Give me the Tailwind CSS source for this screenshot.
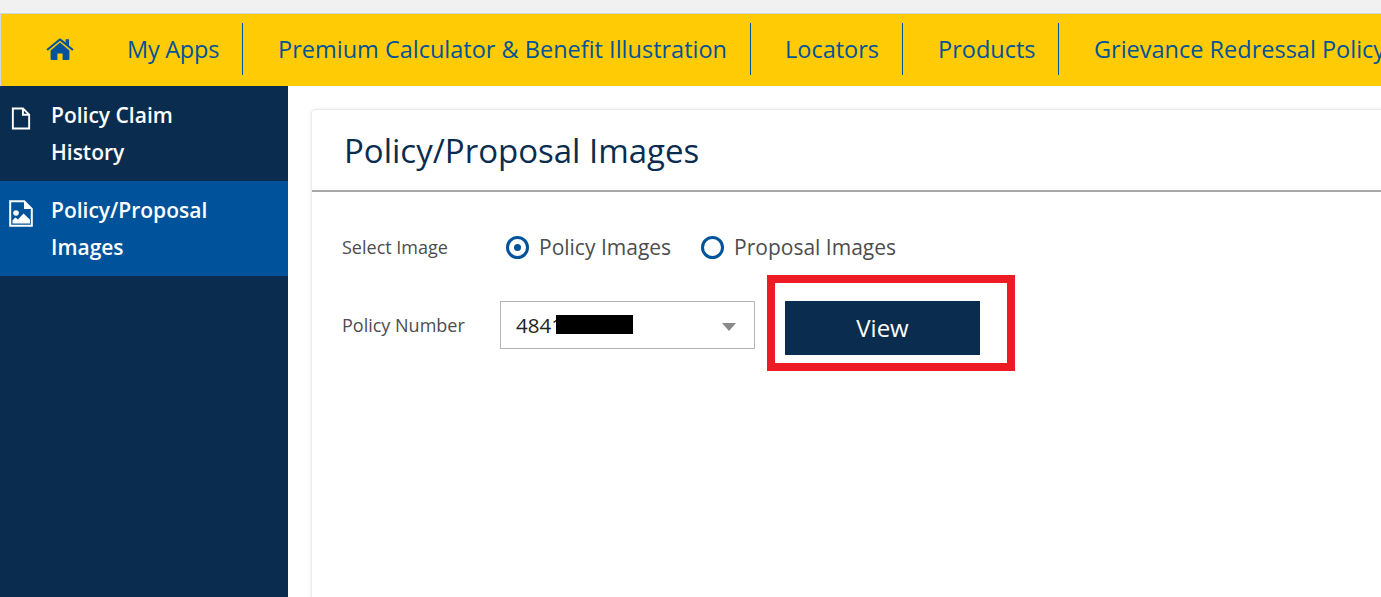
<!DOCTYPE html>
<html lang="en">
<head>
    <meta charset="UTF-8">
    <title>Policy/Proposal Images</title>
    <script src="https://cdn.jsdelivr.net/npm/@tailwindcss/browser@4"></script>
</head>
<body class="relative h-[597px] w-[1381px] overflow-hidden bg-white font-['Open_Sans',sans-serif]">
    <div class="h-[13px] bg-[#f1f1f1] border-b border-[#d4d8dc] box-content"></div>

    <nav class="flex h-[72px] items-center overflow-hidden whitespace-nowrap bg-[#ffcb05] pb-[2px] pl-[1px] border-l border-[#d4d8dc] text-[23.5px] text-[#00539b]">
        <div class="ml-[44px] mr-[53px] w-[28px] shrink-0">
            <svg viewBox="0 0 28 22" class="h-[22px] w-[28px] fill-[#00539b]">
                <path d="M14 4.6 4.6 12.4V21a1 1 0 0 0 1 1h5.8v-6.6h5.2V22h5.8a1 1 0 0 0 1-1v-8.6z"/>
                <path d="M27.6 11.2 23 7.4V1.2h-3.4v3.4L15.2.9a2 2 0 0 0-2.4 0L.4 11.2l1.3 1.6L14 2.7l12.3 10.1z"/>
            </svg>
        </div>
        <a class="flex h-[52px] w-[116px] shrink-0 items-center border-r border-[#00539b] pt-[2px] tracking-[-0.25px]">My Apps</a>
        <a class="flex h-[52px] w-[508px] shrink-0 items-center border-r border-[#00539b] pl-[35px] pt-[2px]">Premium Calculator &amp; Benefit Illustration</a>
        <a class="flex h-[52px] w-[152px] shrink-0 items-center border-r border-[#00539b] pl-[34px] pt-[2px]">Locators</a>
        <a class="flex h-[52px] w-[156px] shrink-0 items-center border-r border-[#00539b] pl-[35px] pt-[2px]">Products</a>
        <a class="flex h-[52px] shrink-0 items-center pl-[35px] pt-[2px]">Grievance Redressal Policy</a>
    </nav>

    <div class="flex h-[511px]">
        <aside class="w-[288px] shrink-0 bg-[#0a2d4f] text-[21px] font-semibold leading-[37px] text-white">
            <div class="flex h-[95px] pl-[11px] pt-[11px]">
                <svg viewBox="0 0 20 24" class="mt-[10px] mr-[20px] h-[23px] w-[20px] shrink-0 fill-none stroke-white stroke-2">
                    <path d="M1.5 1.5h10.5l6.5 6.5v14.5h-17z"/>
                    <path d="M12 1.5v6.5h6.5"/>
                </svg>
                <span class="w-[200px]">Policy Claim History</span>
            </div>
            <div class="flex h-[95px] bg-[#00539b] pl-[9px] pt-[11px]">
                <svg viewBox="0 0 24 27" class="mt-[8px] mr-[18px] h-[27px] w-[24px] shrink-0">
                    <path d="M1.2 1.2h14l7.6 7.6v17h-21.6z" fill="none" stroke="white" stroke-width="2"/>
                    <path d="M15 1.5v7.5h7.5z" fill="white"/>
                    <circle cx="7" cy="13" r="2.8" fill="white"/>
                    <path d="M3.5 23.5v-3.2l3-2.8 2.4 2 5.6-6 6.5 6.2v3.8z" fill="white"/>
                </svg>
                <span class="w-[200px]">Policy/Proposal Images</span>
            </div>
        </aside>

        <main class="min-w-0 flex-1 overflow-hidden pl-[23px] pt-[23px]">
            <section class="h-[600px] w-[1200px] rounded-tl-[4px] border border-[#ebebeb] shadow-[0_0_4px_rgba(0,0,0,0.08)]">
                <h1 class="h-[82px] border-b-2 border-[#a6a6a6] pl-[32px] pt-[17px] text-[33px] font-normal leading-[48px] text-[#0a2d4f]">Policy/Proposal Images</h1>

                <div class="flex h-[110px] items-center pl-[30px]">
                    <span class="w-[164px] text-[18px] text-[#4d4d4d]">Select Image</span>
                    <label class="flex items-center text-[21px] text-[#4d4d4d]">
                        <span class="mr-[10px] flex h-[23px] w-[23px] items-center justify-center rounded-full border-[3px] border-[#00539b]">
                            <span class="h-[7px] w-[7px] rounded-full bg-[#00539b]"></span>
                        </span>
                        <span class="mt-[2px]">Policy Images</span>
                    </label>
                    <label class="ml-[30px] flex items-center text-[21px] text-[#4d4d4d]">
                        <span class="mr-[10px] h-[23px] w-[23px] rounded-full border-[3px] border-[#00539b]"></span>
                        <span class="mt-[2px]">Proposal Images</span>
                    </label>
                </div>

                <div class="-mt-[1px] flex items-start pl-[30px]">
                    <span class="flex h-[48px] w-[158px] items-center text-[18px] text-[#4d4d4d]">Policy Number</span>
                    <div class="relative flex h-[48px] w-[255px] items-center border border-[#b5b5b5] pl-[15px] text-[20.5px] text-[#222]">
                        4841
                        <span class="absolute left-[55px] top-[13px] h-[19px] w-[77px] bg-black"></span>
                        <span class="absolute right-[18px] top-[21px] h-0 w-0 border-x-[7px] border-t-[8px] border-x-transparent border-t-[#8a8a8a]"></span>
                    </div>
                    <button class="ml-[30px] h-[54px] w-[195px] bg-[#0a2d4f] text-[24px] text-white">View</button>
                </div>
            </section>
        </main>
    </div>

    <!-- red highlight drawn on top of the screenshot -->
    <div class="absolute left-[767px] top-[275px] h-[96px] w-[248px] border-[8px] border-[#ed1c24]"></div>
</body>
</html>
